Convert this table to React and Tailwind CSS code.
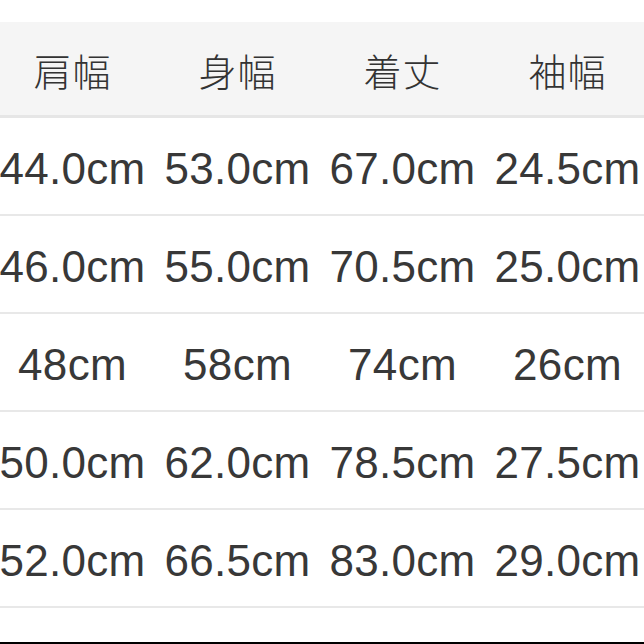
import React from 'react';

const headers = ['肩幅', '身幅', '着丈', '袖幅'];
const rows = [
  ['44.0cm', '53.0cm', '67.0cm', '24.5cm'],
  ['46.0cm', '55.0cm', '70.5cm', '25.0cm'],
  ['48cm', '58cm', '74cm', '26cm'],
  ['50.0cm', '62.0cm', '78.5cm', '27.5cm'],
  ['52.0cm', '66.5cm', '83.0cm', '29.0cm'],
];

const SizeTable = () => {
  return (
    <div className="w-[644px] h-[644px] bg-white overflow-hidden flex flex-col text-[#333333] font-['Liberation_Sans','Noto_Sans_CJK_JP',sans-serif]">
      <div className="h-[22px] shrink-0" />
      <div className="w-[660px] -ml-[10px]">
        {/* Header */}
        <div className="grid grid-cols-4 h-[96px] bg-[#f5f5f5] border-b-[3px] border-[#e6e6e6]">
          {headers.map((h) => (
            <div key={h} className="flex items-center justify-center pt-[2px] text-[38px] font-['Noto_Sans_CJK_JP',sans-serif] font-light tracking-[1px]">
              {h}
            </div>
          ))}
        </div>
        {/* Rows */}
        {rows.map((r, i) => (
          <div key={i} className="grid grid-cols-4 h-[98px] border-b-2 border-[#e8e8e8]">
            {r.map((v, j) => (
              <div key={j} className="flex items-center justify-center pt-[6px] text-[44px] text-[#383838] whitespace-nowrap tracking-[0.3px]">
                {v}
              </div>
            ))}
          </div>
        ))}
      </div>
      <div className="flex-1" />
      <div className="h-[2px] bg-black shrink-0" />
    </div>
  );
};

export default SizeTable;
